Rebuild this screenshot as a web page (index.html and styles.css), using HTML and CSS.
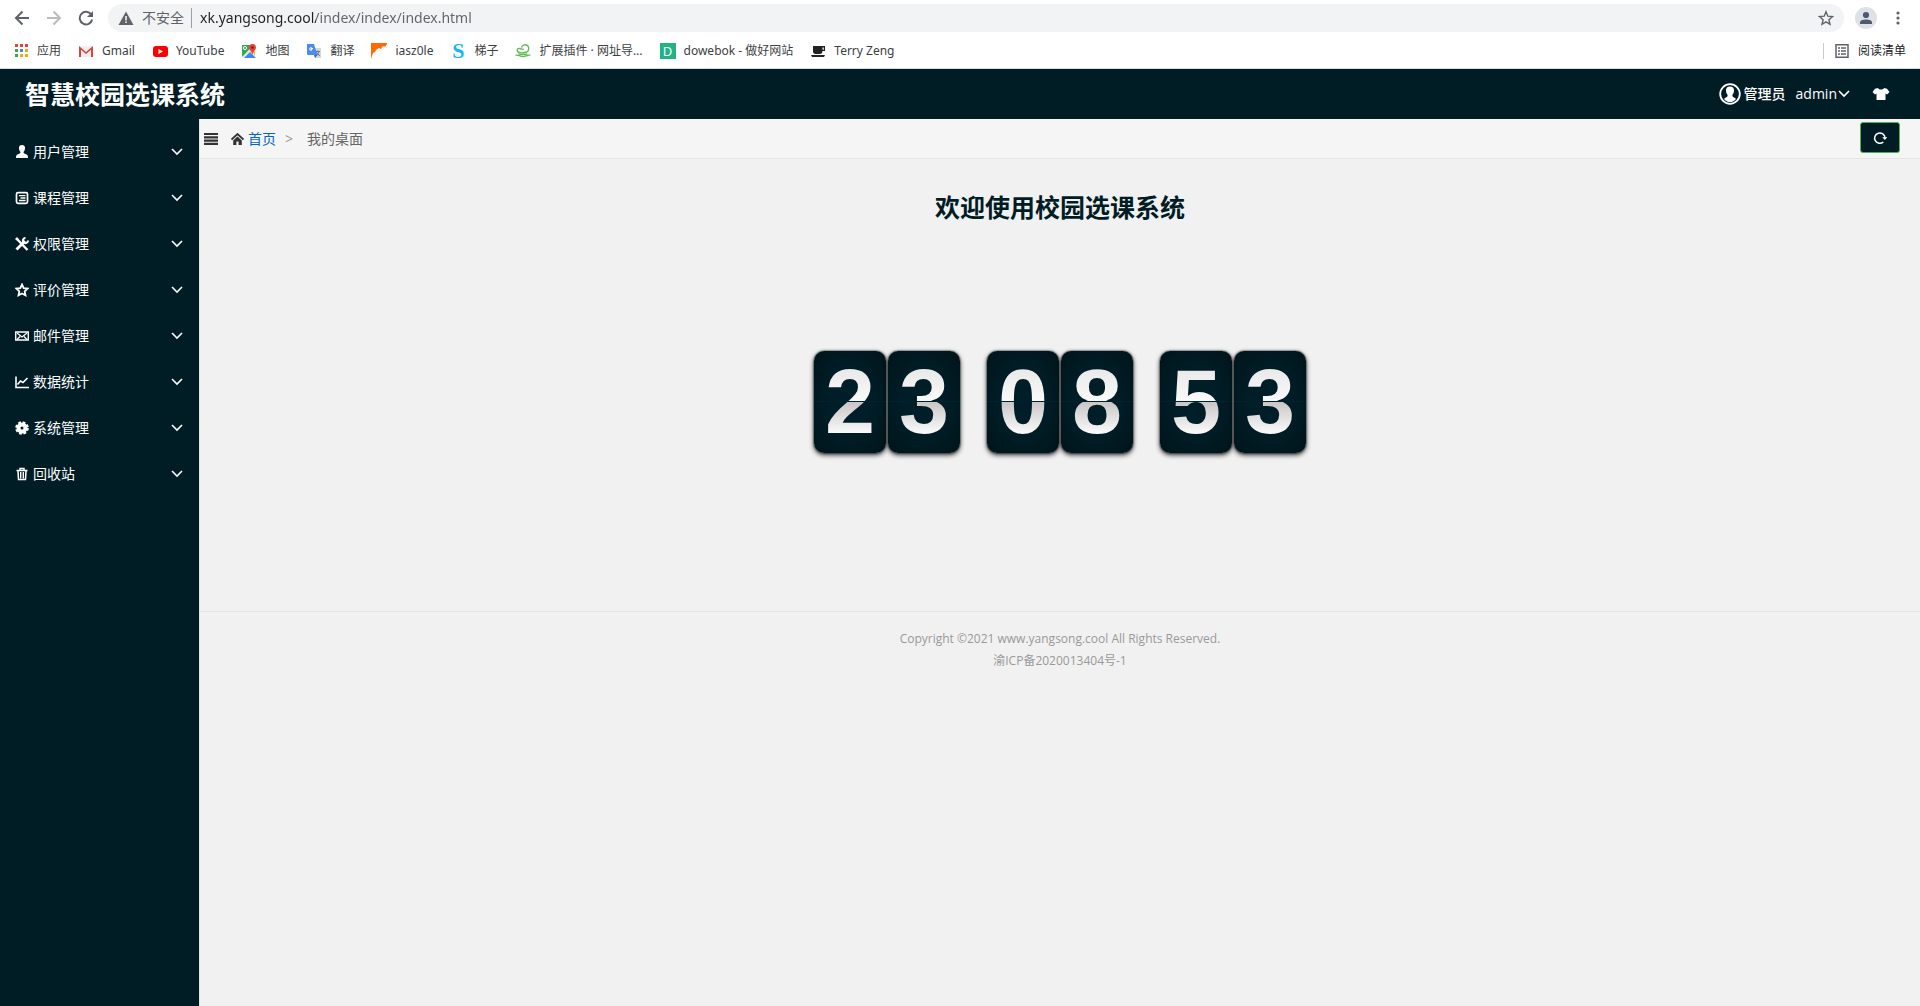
FILE: index.html
```html
<!DOCTYPE html>
<html lang="zh-CN">
<head>
<meta charset="utf-8">
<meta name="viewport" content="width=device-width, initial-scale=1">
<title>智慧校园选课系统</title>
<link rel="stylesheet" href="styles.css">
</head>
<body>
<svg width="0" height="0" class="sprite" aria-hidden="true">
  <symbol id="chevron" viewBox="0 0 12 12"><path d="M1 3l5 5 5-5" fill="none" stroke="currentColor" stroke-width="1.6"/></symbol>
</svg>

<div class="browser">
  <div class="toolbar">
    <button class="tool" aria-label="后退"><svg width="16" height="16" viewBox="0 0 16 16" fill="none" stroke="#5f6368" stroke-width="2"><path d="M15 8H2M8.500 1.500L2 8l6.500 6.500"/></svg></button>
    <button class="tool" aria-label="前进"><svg width="16" height="16" viewBox="0 0 16 16" fill="none" stroke="#babcbe" stroke-width="2"><path d="M1 8h13M7.500 1.500L14 8l-6.500 6.500"/></svg></button>
    <button class="tool" aria-label="刷新"><svg width="16" height="16" viewBox="0 0 16 16"><path d="M13.300 4.600A6.300 6.300 0 1 0 14.200 9.500" fill="none" stroke="#5f6368" stroke-width="2"/><path d="M15 1v6H9z" fill="#5f6368"/></svg></button>
    <div class="omnibox">
      <svg width="16" height="16" viewBox="0 0 16 16"><path d="M8 1.500L15.500 15H.5z" fill="#5f6368"/><path d="M7.200 6h1.600v4.500H7.200zM7.200 11.500h1.600v1.600H7.200z" fill="#f1f3f4"/></svg>
      <span class="insecure">不安全</span>
      <input class="url" type="text" aria-label="地址" value="xk.yangsong.cool/index/index/index.html">
      <button class="star" aria-label="收藏"><svg width="16" height="16" viewBox="0 0 16 16"><path d="M8 1.800l1.800 4.400 4.700.4-3.600 3.100 1.100 4.600L8 11.900l-4 2.400 1.100-4.600L1.500 6.600l4.700-.4z" fill="none" stroke="#5f6368" stroke-width="1.400"/></svg></button>
    </div>
    <button class="avatar" aria-label="用户"><svg width="22" height="22" viewBox="0 0 22 22"><circle cx="11" cy="11" r="11" fill="#dee1e6"/><circle cx="11" cy="8" r="3.100" fill="#4f5a6e"/><path d="M5 17v-1.500c0-2.200 3.500-3 6-3s6 .8 6 3V17z" fill="#4f5a6e"/></svg></button>
    <button class="more" aria-label="更多"><svg width="4" height="16" viewBox="0 0 4 16" fill="#5f6368"><circle cx="2" cy="3" r="1.600"/><circle cx="2" cy="8" r="1.600"/><circle cx="2" cy="13" r="1.600"/></svg></button>
  </div>
  <div class="bookmarks">
    <a href="#"><svg width="16" height="16" viewBox="0 0 16 16"><path d="M2 1h3v3H2zM7 1h3v3H7zM12 1h3v3h-3z" fill="#ea4335"/><path d="M2 6h3v3H2z" fill="#34a853"/><path d="M7 6h3v3H7z" fill="#4285f4"/><path d="M12 6h3v3h-3zM12 11h3v3h-3zM7 11h3v3H7z" fill="#f5ab00"/><path d="M2 11h3v3H2z" fill="#34a853"/></svg>应用</a>
    <a href="#"><svg width="16" height="16" viewBox="0 0 16 16"><path d="M1 3h14v11H1z" fill="#eceff1"/><path d="M1 3l7 6 7-6v11h-2V6.800l-5 4.200-5-4.200V14H1z" fill="#db4437"/></svg>Gmail</a>
    <a href="#"><svg width="16" height="16" viewBox="0 0 16 16"><rect x="1" y="3" width="15" height="11" rx="3" fill="#f00"/><path d="M6.500 6v5L11 8.500z" fill="#fff"/></svg>YouTube</a>
    <a href="#"><svg width="16" height="16" viewBox="0 0 16 16"><path d="M1 2h9v7l-9 5z" fill="#34a853"/><path d="M1 14L10.500 4l1.500 5-9 6z" fill="#e3e6ea"/><path d="M3 15l6-6 6 6z" fill="#4285f4"/><path d="M12 9l2-1v6z" fill="#fbc02d"/><circle cx="4" cy="5" r="1.600" fill="none" stroke="#fff"/><path d="M11.500 1a3.500 3.500 0 0 1 3.500 3.500C15 7 12.300 8 11.500 12 10.700 8 8 7 8 4.500A3.500 3.500 0 0 1 11.500 1z" fill="#ea4335"/><circle cx="11.500" cy="4.500" r="1.300" fill="#8c1c13"/></svg>地图</a>
    <a href="#"><svg width="16" height="16" viewBox="0 0 16 16"><path d="M6 5h9v10H9z" fill="#d5d8db"/><path d="M1 1h7l3.500 11H2a1 1 0 0 1-1-1z" fill="#4c8bf5"/><path d="M7 5.500H5v1.200h1c-.3 1-2.300 1-2.300-.7s1.500-1.900 2.200-.9" fill="none" stroke="#fff"/><path d="M9.500 8.500H14M11.800 7.500v1M13 8.500c-.5 2-2 3.500-3 4M10.800 9.500l3 3.500" fill="none" stroke="#607d8b"/><path d="M8 12h3.500L9 15z" fill="#3367d6"/></svg>翻译</a>
    <a href="#"><svg width="16" height="16" viewBox="0 0 16 16"><path d="M0 0h16v1l-2 3-1-1-2 1-1 2-2-1-3 2-1 2-2 1-1 3-1 3z" fill="#ff6a00"/></svg>iasz0le</a>
    <a href="#"><span class="mark mark-s">S</span>梯子</a>
    <a href="#"><svg width="16" height="16" viewBox="0 0 16 16" fill="none" stroke="#62bb55" stroke-width="1.400"><path d="M6.500 4.500C7 2 9.500 1.300 11.500 2c3 1.200 3 5.500.3 7-2.500 1.200-8 1.300-9.300-.5C1.500 6.500 3 5 5 5.500c1.500.4 2.500 1.500 4 .5"/><path d="M.5 12.300c2.500-.8 4 1.200 7.500 1.200s5-2 7.500-1.200M3.500 10.800c2 .8 7 .8 9 0"/></svg>扩展插件 · 网址导...</a>
    <a href="#"><span class="mark mark-d">D</span>dowebok - 做好网站</a>
    <a href="#"><svg width="16" height="16" viewBox="0 0 16 16"><path d="M3 3h12v5h-2.500c0 2-1 3-2.500 3H5.500C4 11 3 10 3 8.500zM1 12h14l-1 2H2z" fill="#222"/><path d="M12.500 4.500h1.300v2.300h-1.300z" fill="#fff"/></svg>Terry Zeng</a>
    <a href="#" class="reading"><svg width="16" height="16" viewBox="0 0 16 16"><path d="M2 1.800h12v12.400H2z" fill="none" stroke="#5f6368" stroke-width="1.500"/><path d="M4 5h2M7 5h5M4 8h2M7 8h5M4 11h2M7 11h5" stroke="#5f6368" stroke-width="1.500"/></svg>阅读清单</a>
  </div>
</div>

<header class="header">
  <h1>智慧校园选课系统</h1>
  <div class="account">
    <button class="role"><svg width="22" height="22" viewBox="0 0 22 22"><circle cx="11" cy="11" r="9.800" fill="none" stroke="currentColor" stroke-width="1.800"/><path d="M11 3.500c3 0 4.300 2 4 4.500-.2 1.700-.8 3-1.500 3.700-.4 1.500 0 2.300 2.500 3.300l1 1c-1.500 2-3.500 3.200-6 3.200S6.500 18 5 16l1-1c2.500-1 2.900-1.800 2.500-3.300C7.800 11 7.200 9.700 7 8c-.3-2.500 1-4.500 4-4.500z" fill="currentColor"/></svg>管理员</button>
    <button class="user">admin<svg width="12" height="12"><use href="#chevron"/></svg></button>
    <button class="theme" aria-label="主题"><svg width="18" height="14" viewBox="0 0 18 14"><path d="M6 1c1 2 5 2 6 0l3 .8L17.500 5 15 7.500l-1.500-1V13h-9V6.500L3 7.500.5 5 3 1.800z" fill="currentColor"/></svg></button>
  </div>
</header>

<div class="layout">
  <nav class="sidebar">
    <button><svg width="14" height="14" viewBox="0 0 14 14" fill="currentColor"><path d="M7 0c2.200 0 3.300 1.500 3 3.500-.1 1.500-.7 2.800-1.500 3.500 0 1.300.6 1.600 2.500 2.300 1.600.6 2 1.500 2 3.700H1c0-2.200.4-3.100 2-3.700C4.900 8.600 5.500 8.300 5.500 7 4.700 6.300 4.100 5 4 3.500 3.700 1.500 4.800 0 7 0z"/></svg>用户管理<svg class="chev" width="12" height="12"><use href="#chevron"/></svg></button>
    <button><svg width="14" height="14" viewBox="0 0 14 14" fill="none" stroke="currentColor" stroke-width="1.700"><rect x="1.500" y="1.700" width="11" height="10.600" rx="1.500"/><path d="M4 4.700h6.500M5.500 7h5M4 9.500h6.500" stroke-width="1.300"/></svg>课程管理<svg class="chev" width="12" height="12"><use href="#chevron"/></svg></button>
    <button><svg width="14" height="14" viewBox="0 0 14 14" fill="none" stroke="currentColor"><path d="M1.500 1.500L12.500 13" stroke-width="2.400"/><path d="M1.500 12.500L10 4" stroke-width="2.800"/><path d="M13 3.500A2.600 2.600 0 1 1 10.500 1" stroke-width="2"/><path d="M0 2l2-2 2 2.500L2.500 4z" fill="currentColor" stroke="none"/></svg>权限管理<svg class="chev" width="12" height="12"><use href="#chevron"/></svg></button>
    <button><svg width="14" height="14" viewBox="0 0 14 14" fill="none" stroke="currentColor" stroke-width="1.800"><path d="M7 1.500l1.700 3.600 3.900.5-2.900 2.700.8 4L7 10.400l-3.500 1.900.8-4L1.400 5.600l3.900-.5z"/></svg>评价管理<svg class="chev" width="12" height="12"><use href="#chevron"/></svg></button>
    <button><svg width="14" height="14" viewBox="0 0 14 14" fill="none" stroke="currentColor" stroke-width="1.400"><path d="M.7 3h12.600v8H.7z"/><path d="M2 4l5 4 5-4M2 10.500l3-3M12 10.500l-3-3" stroke-width="1.300"/></svg>邮件管理<svg class="chev" width="12" height="12"><use href="#chevron"/></svg></button>
    <button><svg width="14" height="14" viewBox="0 0 14 14" fill="none" stroke="currentColor" stroke-width="1.600"><path d="M1 1.500v11h13M2.500 9.500l3-3.500 2.500 1.500L12.500 3"/></svg>数据统计<svg class="chev" width="12" height="12"><use href="#chevron"/></svg></button>
    <button><svg width="14" height="14" viewBox="0 0 14 14" fill="none" stroke="currentColor"><circle cx="7" cy="7" r="3.500" stroke-width="4"/><circle cx="7" cy="7" r="5.500" stroke-width="2.600" stroke-dasharray="2.600 1.720"/></svg>系统管理<svg class="chev" width="12" height="12"><use href="#chevron"/></svg></button>
    <button><svg width="14" height="14" viewBox="0 0 14 14" fill="none" stroke="currentColor"><path d="M1.500 3.500h11M5 3V1.500h4V3" stroke-width="1.400"/><path d="M3 4l.5 8.500h7L11 4" stroke-width="1.500"/><path d="M5.700 5v6.500M8.300 5v6.500" stroke-width="1.400"/></svg>回收站<svg class="chev" width="12" height="12"><use href="#chevron"/></svg></button>
  </nav>

  <main class="main">
    <div class="crumbs">
      <button class="toggle" aria-label="收起菜单"><svg width="14" height="12" viewBox="0 0 14 12"><path d="M0 1h14M0 4.300h14M0 7.600h14M0 10.900h14" stroke="#333" stroke-width="2.200"/></svg></button>
      <svg width="13" height="12" viewBox="0 0 13 12"><path d="M.5 6.500l6-5.500 6 5.500" fill="none" stroke="#333" stroke-width="1.800"/><path d="M2.200 7.500l4.300-4 4.300 4V12H7.600V8.500H5.400V12H2.200z" fill="#333"/></svg>
      <a href="#">首页</a><span class="sep">&gt;</span><span>我的桌面</span>
      <button class="refresh" aria-label="刷新"><svg width="14" height="14" viewBox="0 0 14 14"><path d="M10.300 11A5.200 5.200 0 1 1 12 6.800" fill="none" stroke="#fff" stroke-width="1.500"/><path d="M9.300 6.300H14.300L11.800 9z" fill="#fff"/></svg></button>
    </div>
    <h2>欢迎使用校园选课系统</h2>
    <div class="clock">
      <div class="pair"><span class="card"><b>2</b></span><span class="card"><b>3</b></span></div>
      <div class="pair"><span class="card"><b>0</b></span><span class="card"><b>8</b></span></div>
      <div class="pair"><span class="card"><b>5</b></span><span class="card"><b>3</b></span></div>
    </div>
    <footer class="footer">
      <p>Copyright ©2021 www.yangsong.cool All Rights Reserved.</p>
      <p>渝ICP备2020013404号-1</p>
    </footer>
  </main>
</div>
</body>
</html>
```

FILE: styles.css
```css
* { box-sizing: border-box; }

body {
  margin: 0;
  min-height: 100vh;
  display: flex;
  flex-direction: column;
  background: #f1f1f1;
  color: #666;
  font: 14px/24px "Open Sans", "Noto Sans CJK SC", sans-serif;
}

h1, h2, p { margin: 0; }
a { color: inherit; text-decoration: none; }
svg { flex: none; display: block; }
.sprite { position: absolute; }

button {
  display: flex;
  align-items: center;
  margin: 0;
  padding: 0;
  border: 0;
  background: none;
  color: inherit;
  font: inherit;
  cursor: pointer;
}

/* browser bars */
.browser {
  background: #fff;
  border-bottom: 1px solid #d5d7d9;
}

.toolbar {
  display: flex;
  align-items: center;
  height: 36px;
  padding: 0 20px 0 14px;
}

.tool { margin-right: 16px; }

.omnibox {
  flex: 1;
  display: flex;
  align-items: center;
  height: 28px;
  margin: 0 11px 0 -2px;
  padding: 0 10px;
  border-radius: 14px;
  background: #f1f3f4;
}

.insecure {
  margin: 0 7px 0 8px;
  color: #5f6368;
  line-height: 20px;
}

.url {
  flex: 1;
  height: 14px;
  padding: 0 0 0 8px;
  border: 0;
  border-left: 1px solid #9aa0a6;
  outline: 0;
  color: #202124;
  background: linear-gradient(to right, #202124 124px, #5f6368 124px);
  -webkit-background-clip: text;
  background-clip: text;
  -webkit-text-fill-color: transparent;
  height: 20px;
  font: 14px/20px "Noto Sans", sans-serif;
}

.more { margin-left: 19px; }

.bookmarks {
  display: flex;
  align-items: center;
  gap: 17px;
  height: 32px;
  padding: 0 14px 2px 13px;
  color: #3c4043;
  font: 12px/20px "Noto Sans", "Noto Sans CJK SC", sans-serif;
}

.bookmarks a {
  display: flex;
  align-items: center;
  gap: 8px;
  white-space: nowrap;
}

.bookmarks .reading {
  margin-left: auto;
  padding-left: 10px;
  border-left: 1px solid #ccc;
  line-height: 16px;
  color: #202124;
}

.mark {
  width: 16px;
  height: 16px;
  line-height: 16px;
  text-align: center;
}

.mark-s {
  color: #12b7f5;
  font: bold 22px/16px "Liberation Serif", serif;
}

.mark-d {
  background: #21b384;
  color: #fff;
  font-size: 13px;
}

/* application header */
.header {
  display: flex;
  align-items: center;
  justify-content: space-between;
  height: 50px;
  padding: 0 30px 0 25px;
  background: #001d26;
  color: #fff;
}

.header h1 {
  font-size: 25px;
  line-height: 48px;
  font-weight: 700;
}

.account {
  display: flex;
  align-items: center;
  font-weight: 500;
}

.role { gap: 3px; }
.user { margin: 0 22px 0 10px; gap: 1px; }

.layout {
  flex: 1;
  display: flex;
}

.sidebar {
  flex: none;
  width: 200px;
  padding-top: 10px;
  border-right: 1px solid #e5e5e5;
  background: #001d26;
  color: #fff;
}

.sidebar button {
  width: 100%;
  height: 46px;
  padding: 0 16px 0 15px;
  gap: 4px;
}

.chev { margin-left: auto; }

.main {
  flex: 1;
  min-width: 0;
}

.crumbs {
  display: flex;
  align-items: center;
  height: 40px;
  padding: 0 20px 0 4px;
  border-bottom: 1px solid #e5e5e5;
  background: #f5f5f5;
}

.toggle { margin-right: 13px; }
.crumbs a { margin-left: 4px; color: #06c; }
.sep { margin: 0 14px 0 9px; color: #999; }

.refresh {
  justify-content: center;
  width: 40px;
  height: 31px;
  margin: 0 0 2px auto;
  border: 1px solid #4caf50;
  border-radius: 3px;
  background: #001d26;
}

.main h2 {
  padding: 24px 0;
  color: #001d26;
  font-size: 25px;
  line-height: 48px;
  font-weight: 700;
  text-align: center;
}

/* flip clock */
.clock {
  display: flex;
  justify-content: center;
  gap: 27px;
  padding: 96px 0 158px;
}

.pair { display: flex; gap: 2px; }

.card {
  position: relative;
  width: 72px;
  height: 102px;
  border-radius: 10px;
  background: radial-gradient(ellipse at center, #001e28 40%, #00141a 100%);
  box-shadow: 0 2px 5px rgba(0, 0, 0, .8), 0 0 2px #000;
  text-align: center;
}

.card b {
  display: block;
  background: linear-gradient(#e8e8e8 16px, #fafafa 50px, #c9c6c6 51px, #fff 85px);
  -webkit-background-clip: text;
  background-clip: text;
  color: transparent;
  font: bold 90px/102px "Liberation Sans", sans-serif;
}

.card::after {
  content: "";
  position: absolute;
  left: 0;
  right: 0;
  top: 50px;
  height: 1px;
  background: #00222e;
}

.footer {
  padding: 16px 0;
  border-top: 1px solid #e6e6e6;
  color: #999;
  font-size: 12px;
  line-height: 22px;
  text-align: center;
}
```
